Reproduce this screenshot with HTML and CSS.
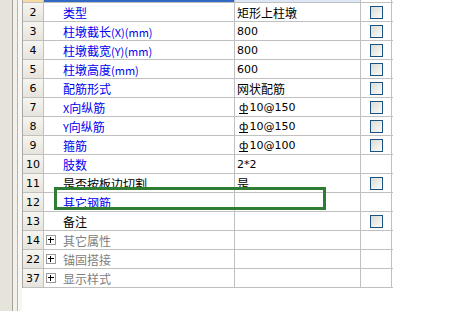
FILE: index.html
```html
<!DOCTYPE html>
<html lang="zh-CN">
<head>
  <meta charset="UTF-8">
  <title>柱墩属性</title>
  <link rel="stylesheet" href="styles.css">
</head>
<body>

  <div class="page">
    <div class="side">
      <div class="side-a"></div>
      <div class="side-b"></div>
      <div class="side-c"></div>
    </div>

    <div class="grid">
      <div class="row top">
        <div class="num"></div>
        <div class="name"></div>
        <div class="val"></div>
        <div class="chk"></div>
      </div>

      <div class="row">
        <div class="num">2</div>
        <div class="name blue">类型</div>
        <div class="val cn">矩形上柱墩</div>
        <div class="chk"><span class="box"></span></div>
      </div>
      <div class="row">
        <div class="num">3</div>
        <div class="name blue">柱墩截长<small>(X)(mm)</small></div>
        <div class="val">800</div>
        <div class="chk"><span class="box"></span></div>
      </div>
      <div class="row">
        <div class="num">4</div>
        <div class="name blue">柱墩截宽<small>(Y)(mm)</small></div>
        <div class="val">800</div>
        <div class="chk"><span class="box"></span></div>
      </div>
      <div class="row">
        <div class="num">5</div>
        <div class="name blue">柱墩高度<small>(mm)</small></div>
        <div class="val">600</div>
        <div class="chk"><span class="box"></span></div>
      </div>
      <div class="row">
        <div class="num">6</div>
        <div class="name blue">配筋形式</div>
        <div class="val cn">网状配筋</div>
        <div class="chk"><span class="box"></span></div>
      </div>
      <div class="row">
        <div class="num">7</div>
        <div class="name blue"><small>X</small>向纵筋</div>
        <div class="val bar"><span class="rebar">ф</span>10@150</div>
        <div class="chk"><span class="box"></span></div>
      </div>
      <div class="row">
        <div class="num">8</div>
        <div class="name blue"><small>Y</small>向纵筋</div>
        <div class="val bar"><span class="rebar">ф</span>10@150</div>
        <div class="chk"><span class="box"></span></div>
      </div>
      <div class="row">
        <div class="num">9</div>
        <div class="name blue">箍筋</div>
        <div class="val bar"><span class="rebar">ф</span>10@100</div>
        <div class="chk"><span class="box"></span></div>
      </div>
      <div class="row">
        <div class="num">10</div>
        <div class="name blue">肢数</div>
        <div class="val">2*2</div>
        <div class="chk"></div>
      </div>
      <div class="row">
        <div class="num">11</div>
        <div class="name">是否按板边切割</div>
        <div class="val cn">是</div>
        <div class="chk"><span class="box"></span></div>
      </div>
      <div class="row">
        <div class="num">12</div>
        <div class="name blue">其它钢筋</div>
        <div class="val"></div>
        <div class="chk"></div>
      </div>
      <div class="row">
        <div class="num">13</div>
        <div class="name">备注</div>
        <div class="val"></div>
        <div class="chk"><span class="box"></span></div>
      </div>

      <div class="row group">
        <div class="num">14</div>
        <div class="name"><span class="plus"></span>其它属性</div>
        <div class="val"></div>
        <div class="chk"></div>
      </div>
      <div class="row group">
        <div class="num">22</div>
        <div class="name"><span class="plus"></span>锚固搭接</div>
        <div class="val"></div>
        <div class="chk"></div>
      </div>
      <div class="row group">
        <div class="num">37</div>
        <div class="name"><span class="plus"></span>显示样式</div>
        <div class="val"></div>
        <div class="chk"></div>
      </div>
    </div>

    <!-- highlight box drawn over row 12 -->
    <div class="mark"></div>
  </div>

</body>
</html>
```

FILE: styles.css
```css
body {
  margin: 0;
  background: #fff;
  font-family: "Noto Sans CJK SC", sans-serif;
  font-size: 12px;
  color: #000;
}

.page {
  position: relative;
  display: flex;
  height: 311px;
  overflow: hidden;
}

/* left strip */
.side {
  display: flex;
  width: 22px;
  height: 100%;
}

.side-a {
  width: 12px;
  background: #e6e4da;
  border-right: 1px solid #a5a398;
}

.side-b {
  width: 4px;
  background: #f1f0ea;
  border-right: 1px solid #b8b6ab;
}

.side-c {
  width: 4px;
  background: #f7f6f2;
}

/* property grid */
.grid {
  width: 370px;
  align-self: flex-start;
  border-left: 1px solid #a8a8a8;
  margin-top: -16px;
}

.row {
  display: flex;
  height: 19px;
  box-sizing: border-box;
  border-bottom: 1px solid #c0c0c0;
}

.row > div {
  box-sizing: border-box;
  height: 18px;
  line-height: 19px;
  border-right: 1px solid #c0c0c0;
  white-space: nowrap;
  overflow: hidden;
}

.num {
  width: 21px;
  text-align: center;
  font-family: "DejaVu Sans", sans-serif;
  font-size: 11px;
  background: linear-gradient(#f6f5f0, #e6e4dc);
}

.name {
  width: 191px;
  padding-left: 19px;
}

.val {
  width: 126px;
  padding-left: 2px;
  font-family: "DejaVu Sans", "Noto Sans CJK SC", sans-serif;
  font-size: 11px;
}

.val.cn {
  font-family: "Noto Sans CJK SC", sans-serif;
  font-size: 12px;
}

.val.bar {
  padding-left: 4px;
}

.chk {
  width: 31px;
  display: flex;
  align-items: center;
  justify-content: center;
}

.blue {
  color: #0000f0;
}

small {
  font-size: 11px;
}

.rebar {
  display: inline-block;
  border-bottom: 1px solid #000;
  line-height: 10px;
  margin-right: 1px;
}

.box {
  width: 13px;
  height: 13px;
  box-sizing: border-box;
  border: 1px solid #1c5180;
  background: linear-gradient(135deg, #dcdcd5, #fbfbf9);
}

/* selected row partially scrolled out at the top */
.top {
  height: 19px;
}

.top .num {
  background: #f8dba0;
}

.top .name {
  background: #316ac5;
}

.top .val {
  background: #dde7f5;
}

/* collapsed groups */
.group .name {
  padding-left: 2px;
  color: #808080;
  display: flex;
  align-items: center;
}

.plus {
  position: relative;
  width: 10px;
  height: 10px;
  box-sizing: border-box;
  border: 1px solid #9a9a9a;
  background: #fff;
  margin-right: 7px;
}

.plus::before,
.plus::after {
  content: "";
  position: absolute;
  background: #000;
}

.plus::before {
  left: 1px;
  top: 3px;
  width: 6px;
  height: 1px;
}

.plus::after {
  left: 3px;
  top: 1px;
  width: 1px;
  height: 6px;
}

/* green annotation */
.mark {
  position: absolute;
  left: 54px;
  top: 187px;
  width: 272px;
  height: 23px;
  box-sizing: border-box;
  border: 3px solid #2e7d32;
}
```
